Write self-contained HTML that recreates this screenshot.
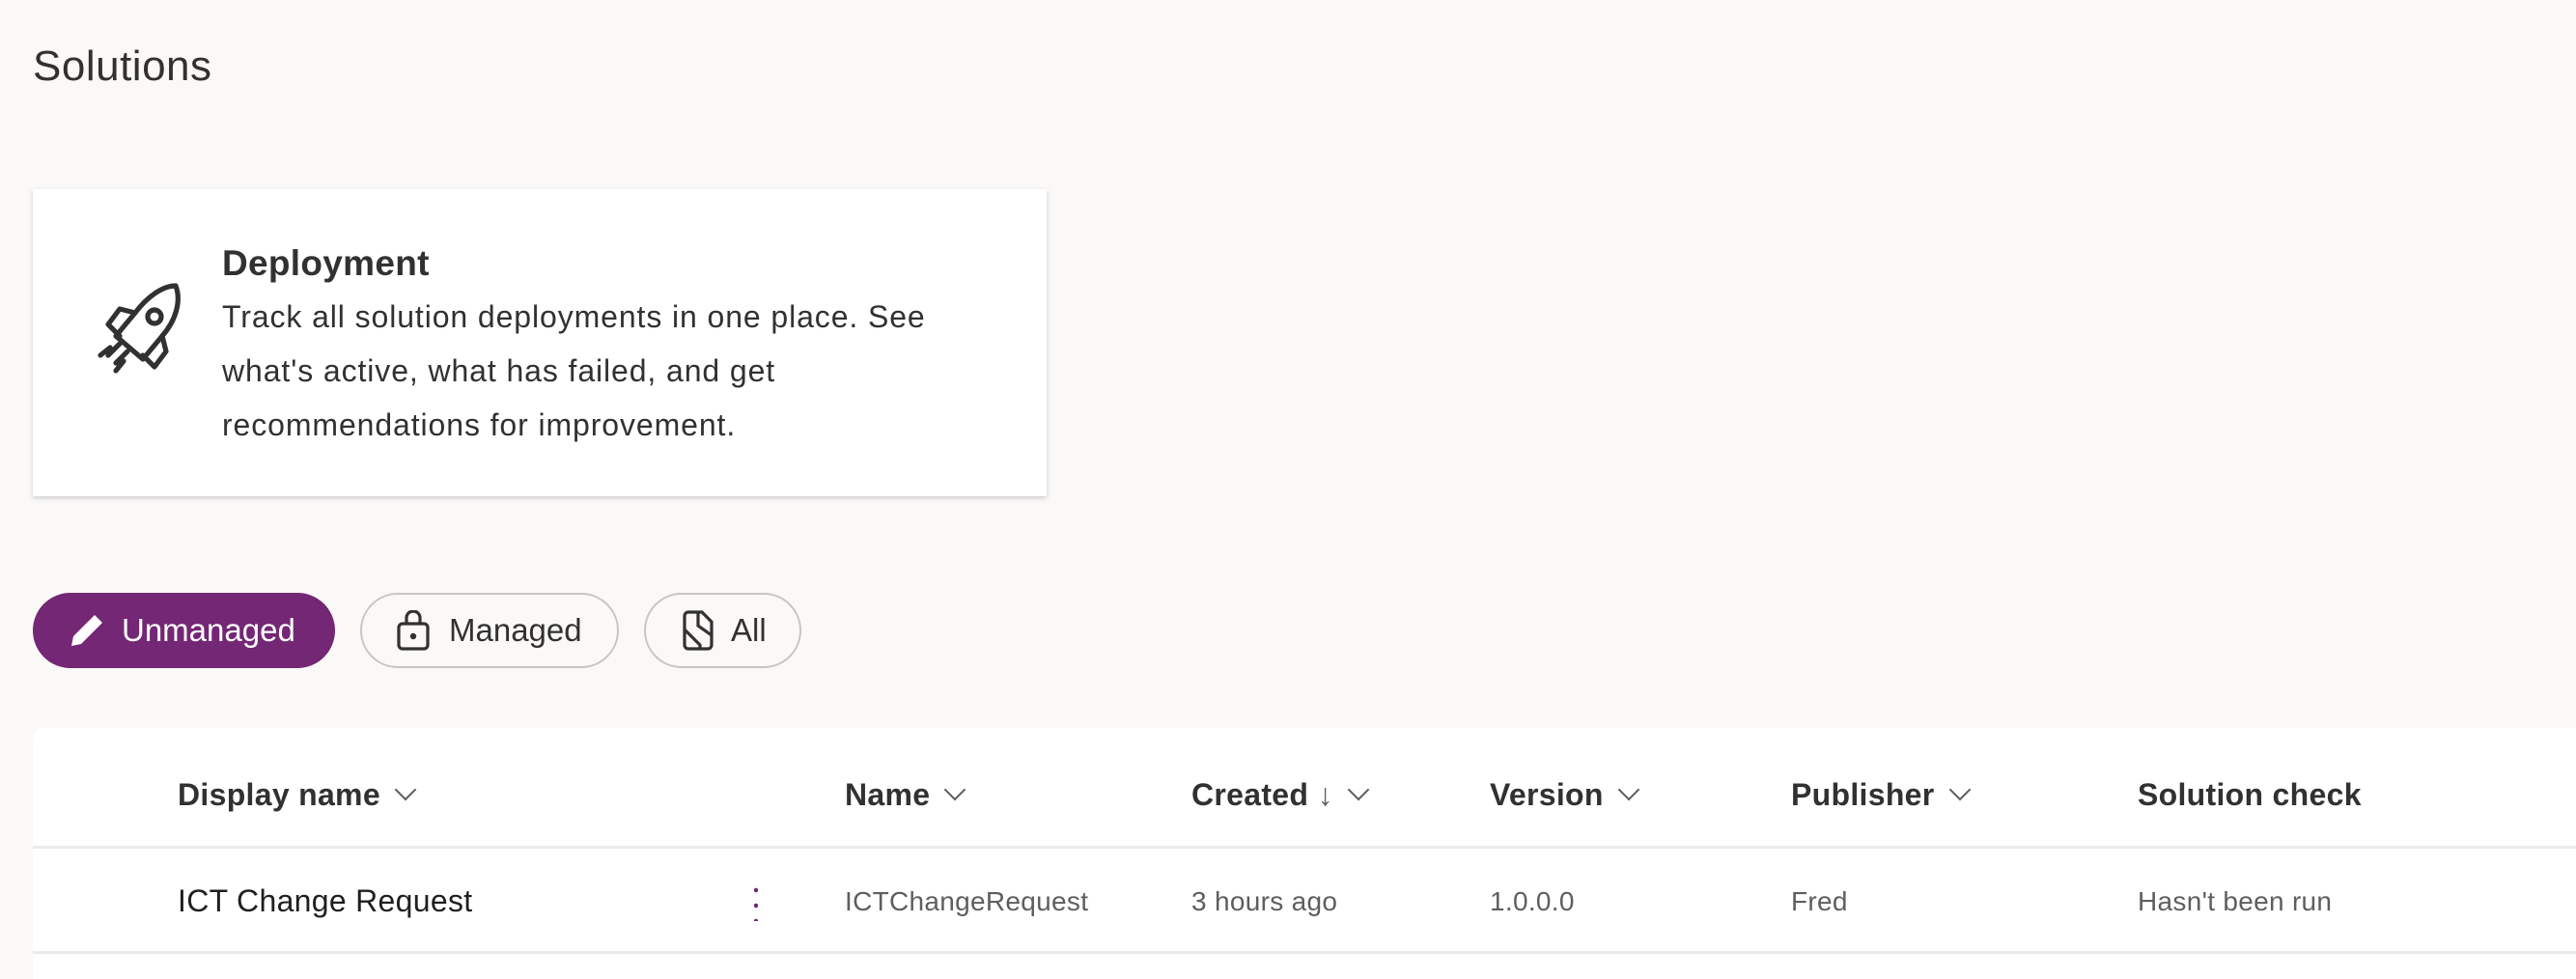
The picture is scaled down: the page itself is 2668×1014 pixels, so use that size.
<!DOCTYPE html>
<html><head><style>
body{margin:0;width:2668px;height:996px;background:#faf9f8;font-family:"Liberation Sans",sans-serif;color:#323130;position:relative;overflow:hidden}
.a{position:absolute;white-space:nowrap}
.card{position:absolute;left:34px;top:196px;width:1050px;height:318px;background:#fff;box-shadow:0 2px 5px rgba(0,0,0,.18)}
.pill{position:absolute;top:614px;height:78px;border-radius:40px;border:2px solid #c8c6c4;background:#faf9f8;font-size:33px;display:flex;align-items:center;box-sizing:border-box}
.tbl{position:absolute;left:34px;top:754px;width:2700px;height:260px;background:#fff;border-radius:12px 0 0 0}
.h{font-size:32px;font-weight:600;color:#323130;top:805px;letter-spacing:0.3px}
.r{font-size:28px;color:#605e5c;top:918px;letter-spacing:0.3px}
.chev{display:inline-block;width:14px;height:14px;border-right:2px solid #605e5c;border-bottom:2px solid #605e5c;transform:rotate(45deg);margin-left:18px;position:relative;top:-8px}
</style></head><body>
<div class="a" style="left:34px;top:44px;font-size:44px;color:#323130;letter-spacing:0.5px">Solutions</div>
<div class="card">
<svg class="a" style="left:62px;top:92px" width="100" height="106" viewBox="0 0 50 53" fill="none" stroke="#323130" stroke-width="2.6" stroke-linejoin="round" stroke-linecap="round">
<path d="M43 4 C36 4 28 10 22 18 L12 30 L26 42 L36 30 C43 22 46 12 43 4 Z"/>
<path d="M22 18 L14 16 L8 24 L14 30"/>
<path d="M36 30 L38 38 L32 46 L26 40"/>
<circle cx="32" cy="20" r="3.5"/>
<path d="M14 34 L8 40 M18 38 L12 44 M9 36 L4 40 M16 43 L12 48"/>
</svg>
<div class="a" style="left:196px;top:56px;font-size:37px;font-weight:600;letter-spacing:0.3px">Deployment</div>
<div class="a" style="left:196px;top:104px;font-size:32px;line-height:56px;letter-spacing:0.9px">Track all solution deployments in one place. See<br>what's active, what has failed, and get<br>recommendations for improvement.</div>
</div>
<div class="pill" style="left:34px;width:313px;background:#742774;border-color:#742774;color:#fff;padding-left:34px">
<svg width="40" height="40" viewBox="0 0 20 20" style="margin-right:16px"><path d="M14 2 L18 6 L7 17 L2 18 L3 13 Z" fill="#fff"/></svg>Unmanaged</div>
<div class="pill" style="left:373px;width:268px;padding-left:36px">
<svg width="34" height="42" viewBox="0 0 17 21" fill="none" stroke="#323130" stroke-width="1.6" style="margin-right:20px"><rect x="1" y="7" width="15" height="13" rx="2"/><path d="M5 7 V4 a3.5 3.5 0 0 1 7 0 V7"/><circle cx="8.5" cy="13.5" r="0.8" fill="#323130"/></svg>Managed</div>
<div class="pill" style="left:667px;width:163px;padding-left:36px">
<svg width="36" height="42" viewBox="0 0 18 21" fill="none" stroke="#323130" stroke-width="1.6" style="margin-right:16px"><path d="M2 3 a2 2 0 0 1 2-2 h7 l5 5 v12 a2 2 0 0 1-2 2 H4 a2 2 0 0 1-2-2 Z"/><path d="M2 10 L10 18 V20"/><path d="M9 1 V8 L16 13"/></svg>All</div>
<div class="tbl"></div>
<div class="a" style="left:34px;top:876px;width:2640px;height:3px;background:#edebe9"></div>
<div class="a" style="left:34px;top:985px;width:2640px;height:3px;background:#edebe9"></div>
<div class="a h" style="left:184px">Display name<span class="chev"></span></div>
<div class="a h" style="left:875px">Name<span class="chev"></span></div>
<div class="a h" style="left:1234px">Created <span style="font-weight:400;color:#605e5c">↓</span><span class="chev"></span></div>
<div class="a h" style="left:1543px">Version<span class="chev"></span></div>
<div class="a h" style="left:1855px">Publisher<span class="chev"></span></div>
<div class="a h" style="left:2214px">Solution check</div>
<div class="a" style="left:184px;top:915px;font-size:32px;color:#201f1e;letter-spacing:0.3px">ICT Change Request</div>
<div class="a" style="left:781px;top:914px;width:4px;height:40px;background:radial-gradient(circle,#742774 2px,transparent 2.5px) 0 0/4px 16px repeat-y"></div>
<div class="a r" style="left:875px">ICTChangeRequest</div>
<div class="a r" style="left:1234px">3 hours ago</div>
<div class="a r" style="left:1543px">1.0.0.0</div>
<div class="a r" style="left:1855px">Fred</div>
<div class="a r" style="left:2214px">Hasn't been run</div>
</body></html>
